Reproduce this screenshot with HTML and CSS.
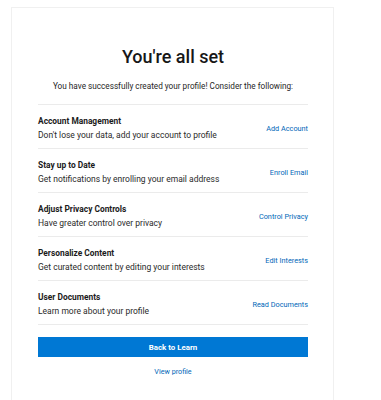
FILE: index.html
```html
<!DOCTYPE html>
<html lang="en">
<head>
  <meta charset="UTF-8">
  <meta name="viewport" content="width=device-width, initial-scale=1.0">
  <title>Profile created</title>
  <link rel="stylesheet" href="styles.css">
</head>
<body>

  <!-- Success card -->
  <section class="card">
    <h1>You're all set</h1>
    <p class="intro">You have successfully created your profile! Consider the following:</p>

    <ul class="steps">
      <li class="step">
        <div class="step-text">
          <p class="step-title">Account Management</p>
          <p class="step-desc">Don't lose your data, add your account to profile</p>
        </div>
        <a href="#" class="step-link">Add Account</a>
      </li>
      <li class="step">
        <div class="step-text">
          <p class="step-title">Stay up to Date</p>
          <p class="step-desc">Get notifications by enrolling your email address</p>
        </div>
        <a href="#" class="step-link">Enroll Email</a>
      </li>
      <li class="step">
        <div class="step-text">
          <p class="step-title">Adjust Privacy Controls</p>
          <p class="step-desc">Have greater control over privacy</p>
        </div>
        <a href="#" class="step-link">Control Privacy</a>
      </li>
      <li class="step">
        <div class="step-text">
          <p class="step-title">Personalize Content</p>
          <p class="step-desc">Get curated content by editing your interests</p>
        </div>
        <a href="#" class="step-link">Edit Interests</a>
      </li>
      <li class="step">
        <div class="step-text">
          <p class="step-title">User Documents</p>
          <p class="step-desc">Learn more about your profile</p>
        </div>
        <a href="#" class="step-link">Read Documents</a>
      </li>
    </ul>

    <button class="primary">Back to Learn</button>
    <a href="#" class="secondary">View profile</a>
  </section>

</body>
</html>
```

FILE: styles.css
```css
body {
  font-family: Roboto, "Open Sans", sans-serif;
  margin: 0;
  padding: 7px 0 0 11px;
  background: #fff;
  color: #171717;
}
.card {
  width: 270px;
  min-height: 400px;
  padding: 0 25px 0 26px;
  border: 1px solid #f0f0f0;
  border-bottom: none;
  box-sizing: content-box;
}
h1 {
  margin: 0;
  padding-top: 34px;
  font-size: 18px;
  font-weight: 500;
  line-height: 30px;
  text-align: center;
}
.intro {
  margin: 7px 0 11px;
  font-size: 8.2px;
  line-height: 14px;
  text-align: center;
  color: #262626;
}
.steps {
  list-style: none;
  margin: 0;
  padding: 0;
  border-top: 1px solid #ebebeb;
}
.step {
  display: flex;
  justify-content: space-between;
  align-items: center;
  padding: 9px 0 6px;
  border-bottom: 1px solid #ebebeb;
}
.step p {
  margin: 0;
  line-height: 14px;
}
.step-title {
  font-size: 8.4px;
  font-weight: 700;
  color: #1b1b1b;
}
.step-desc {
  font-size: 8.5px;
  color: #2b2b2b;
}
.step-link {
  font-size: 7.3px;
  color: #0067b8;
  text-decoration: none;
}
.primary {
  display: block;
  width: 100%;
  height: 20px;
  margin-top: 12px;
  padding: 0;
  border: none;
  background: #0078d4;
  color: #fff;
  font-family: inherit;
  font-size: 7.9px;
  font-weight: 700;
  cursor: pointer;
}
.secondary {
  display: block;
  margin-top: 9px;
  text-align: center;
  font-size: 7.2px;
  line-height: 12px;
  color: #0067b8;
  text-decoration: none;
}
```
